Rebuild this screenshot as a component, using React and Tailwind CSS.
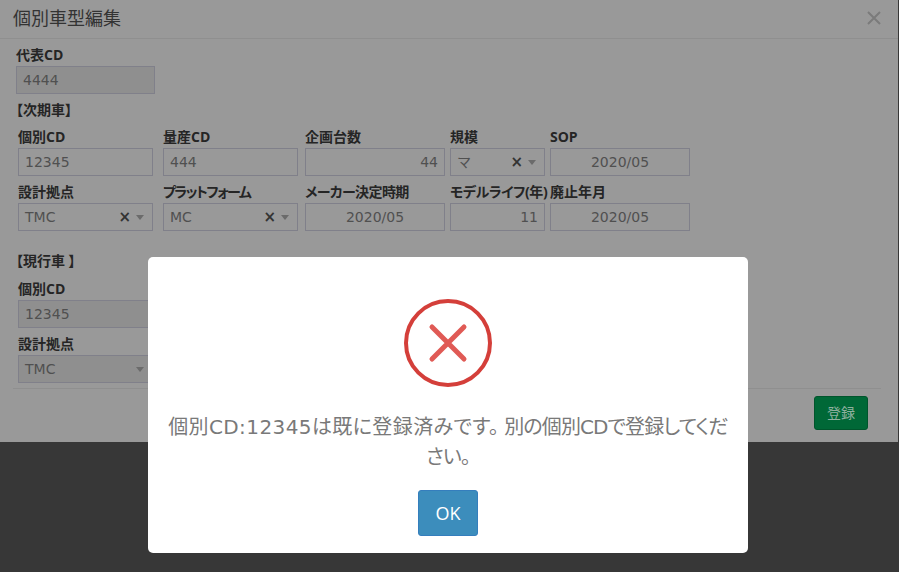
const font = { fontFamily: '"DejaVu Sans", "Noto Sans CJK JP", sans-serif' }
const labelFont = { fontFamily: '"Open Sans", "Noto Sans CJK JP", sans-serif' }

function Field({ label, w, labelClass = '', children }) {
  return (
    <div className={`flex flex-col ${w}`}>
      <label style={labelFont} className={`h-[17px] whitespace-nowrap text-[14px] leading-[15px] font-bold text-[#252525] [font-feature-settings:'palt'] ${labelClass}`}>{label}</label>
      <div className="mt-[2px]">{children}</div>
    </div>
  )
}

function Input({ value, align = 'text-left', disabled }) {
  return (
    <div className={`h-7 w-full border border-[#80808a] px-[6px] text-[14px] leading-[26px] text-[#505050] ${align} ${disabled ? 'bg-[#8f8f8f]' : ''}`}>
      {value}
    </div>
  )
}

function Select({ value, clear = true, disabled }) {
  return (
    <div className={`flex h-7 w-full items-center border border-[#80808a] pt-[1px] pr-[8px] pl-[6px] text-[14px] text-[#505050] ${disabled ? 'bg-[#8f8f8f]' : ''}`}>
      <span className="flex-1">{value}</span>
      {clear && <span className="mr-[5px] text-[15px] leading-none font-bold text-[#333]">×</span>}
      <span className="h-0 w-0 border-x-[4px] border-t-[5px] border-x-transparent border-t-[#6b6b6b]" />
    </div>
  )
}

export default function App() {
  return (
    <div className="relative h-[572px] w-[899px] overflow-hidden bg-[#373737]" style={font}>
      <div className="h-[442px] w-[898px] bg-[#999999]">
        <div className="flex h-[39px] items-center justify-between border-b border-[#8f8f8f] pr-[17px] pb-[2px] pl-[13px]">
          <h4 className="text-[18px] font-normal text-[#333]">個別車型編集</h4>
          <svg width="14" height="14" viewBox="0 0 14 14" stroke="#7b7b7b" strokeWidth="2"><path d="M1 1l12 12M13 1L1 13" /></svg>
        </div>

        <div className="px-4 pt-2">
          <Field label="代表CD" w="w-[139px]"><Input value="4444" disabled /></Field>
          <div style={labelFont} className="mt-[8px] h-[17px] text-[14px] leading-[15px] font-bold text-[#252525] [font-feature-settings:'palt']">【次期車】</div>
        </div>

        <div className="mt-[10px] flex flex-col gap-[8px] pl-[18px]">
          <div className="flex">
            <Field label="個別CD" w="w-[135px] mr-[10px]"><Input value="12345" /></Field>
            <Field label="量産CD" w="w-[135px] mr-[7px]"><Input value="444" /></Field>
            <Field label="企画台数" w="w-[140px] mr-[5px]"><Input value="44" align="text-right" /></Field>
            <Field label="規模" w="w-[95px] mr-[5px]"><Select value="マ" /></Field>
            <Field label="SOP" w="w-[140px]"><Input value="2020/05" align="text-center" /></Field>
          </div>
          <div className="flex">
            <Field label="設計拠点" w="w-[135px] mr-[10px]"><Select value="TMC" /></Field>
            <Field label="プラットフォーム" labelClass="tracking-[-1.5px]" w="w-[135px] mr-[7px]"><Select value="MC" /></Field>
            <Field label="メーカー決定時期" labelClass="tracking-[-0.6px]" w="w-[140px] mr-[5px]"><Input value="2020/05" align="text-center" /></Field>
            <Field label="モデルライフ(年)" labelClass="tracking-[-0.45px]" w="w-[95px] mr-[5px]"><Input value="11" align="text-right" /></Field>
            <Field label="廃止年月" w="w-[140px]"><Input value="2020/05" align="text-center" /></Field>
          </div>
        </div>

        <div style={labelFont} className="mt-[22px] h-[17px] pl-4 text-[14px] leading-[15px] font-bold text-[#252525] [font-feature-settings:'palt']">【現行車 】</div>

        <div className="mt-[11px] flex flex-col gap-[8px] pl-[18px]">
          <Field label="個別CD" w="w-[135px]"><Input value="12345" disabled /></Field>
          <Field label="設計拠点" w="w-[135px]"><Select value="TMC" clear={false} disabled /></Field>
        </div>

        <div className="mx-[13px] mt-[5px] flex w-[868px] justify-end border-t border-[#8f8f8f] pt-[7px] pr-[13px]">
          <button className="h-[34px] w-[54px] rounded-[3px] border border-[#00552c] bg-[#006837] text-[14px] text-[#8fb09f]">登録</button>
        </div>
      </div>

      <div className="absolute top-[257px] left-[148px] flex h-[296px] w-[600px] flex-col items-center rounded-[5px] bg-white">
        <svg className="mt-[42px]" width="88" height="88" viewBox="0 0 88 88" fill="none">
          <circle cx="44" cy="44" r="42" stroke="#d43f3a" strokeWidth="4" />
          <path d="M28 28l32 32M60 28L28 60" stroke="#e05a55" strokeWidth="5" strokeLinecap="round" />
        </svg>
        <p className="mt-[25px] w-[570px] text-center text-[20px] leading-[30px] text-[#797979] [font-feature-settings:'palt']">
          <span className="tracking-[0.4px]">個別CD:12345は既に登録済みです。</span>
          <span className="ml-[5px] tracking-[-0.9px]">別の個別CDで登録してください。</span>
        </p>
        <button style={labelFont} className="mt-[18px] h-[46px] w-[60px] rounded-[3px] border border-[#357ebd] bg-[#3c8dbc] text-[18px] text-white">OK</button>
      </div>
    </div>
  )
}
